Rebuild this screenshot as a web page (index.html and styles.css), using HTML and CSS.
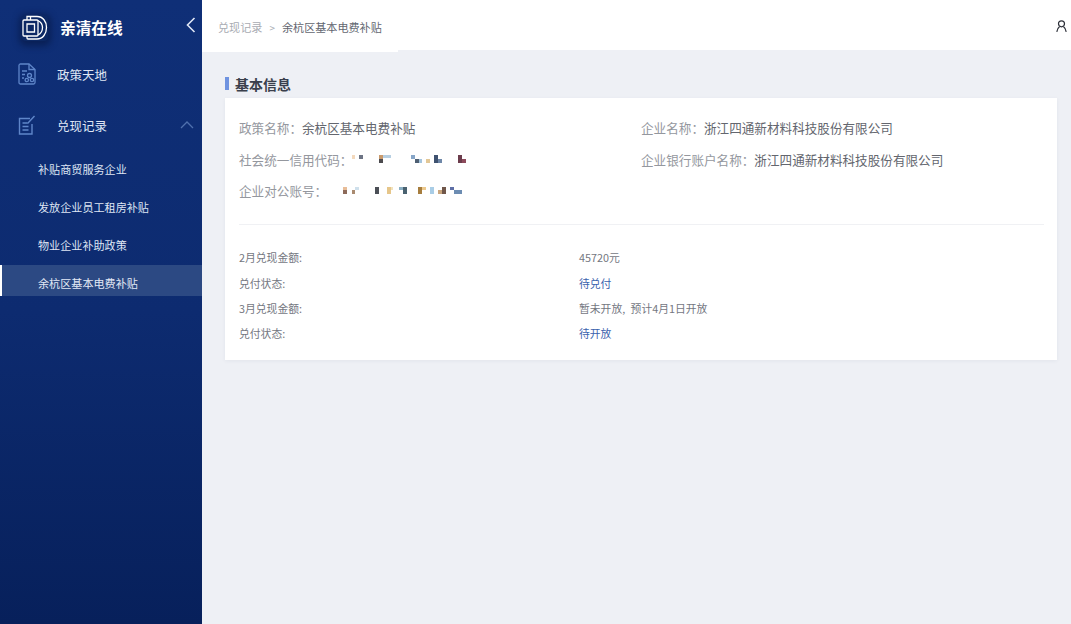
FILE: index.html
```html
<!DOCTYPE html>
<html>
<head>
  <title>基本信息</title>
  <link rel="stylesheet" href="styles.css">
</head>
<body>
  <div class="page">
    <div class="sidebar">
      <div class="brand">
        <svg class="brand-logo" width="26" height="26" viewBox="0 0 26 26" fill="none" stroke="#fff" stroke-width="1.300">
          <rect x="1" y="5" width="15" height="16" rx="1"/>
          <path d="M5 5V1.500h10c6 0 9.500 5 9.500 11s-3.500 11.500-9.500 11.500H6c-.7 0-1-.4-1-1v-2"/>
          <path d="M5 9h7.500v8H5z"/>
          <path d="M8.500 5V1.500M16 5.500c3 1.500 4.500 3.800 4.500 7s-1.500 6-4.500 7.500"/>
        </svg>
        <span class="brand-name">亲清在线</span>
        <svg class="brand-back" width="10" height="16" viewBox="0 0 10 16" fill="none" stroke="#dfe6f5" stroke-width="1.600">
          <path d="M8.500 1 1.500 8l7 7"/>
        </svg>
      </div>
      <div class="menu-item first">
        <svg class="menu-icon" width="18" height="22" viewBox="0 0 18 22" fill="none" stroke="#5f86c9" stroke-width="1.300">
          <path d="M1 2.500C1 1.500 1.700 1 2.500 1h8.500l6 5.500v13c0 1-.7 1.500-1.500 1.500h-13C1.700 21 1 20.500 1 19.500z"/>
          <path d="M11 1v5.500h6M4 8h5M4 11.500h3M4 15h2"/>
          <circle cx="11.500" cy="12.500" r="2"/>
          <circle cx="8.800" cy="17" r="1.700"/>
          <circle cx="14" cy="17" r="1.700"/>
        </svg>
        <span>政策天地</span>
      </div>
      <div class="menu-item second">
        <svg class="menu-icon" width="18" height="20" viewBox="0 0 18 20" fill="none" stroke="#5f86c9" stroke-width="1.400">
          <path d="M12 3.500H1.500v15.500h12.500V9"/>
          <path d="M4.500 8h5M4.500 11.500h6M4.500 15h6"/>
          <path d="M9.500 8.500 16.500 1"/>
        </svg>
        <span>兑现记录</span>
        <svg class="menu-arrow" width="14" height="8" viewBox="0 0 14 8" fill="none" stroke="#4f70ad" stroke-width="1.300">
          <path d="M1 7l6-6 6 6"/>
        </svg>
      </div>
      <div class="submenu">
        <div class="sub-item">补贴商贸服务企业</div>
        <div class="sub-item">发放企业员工租房补贴</div>
        <div class="sub-item">物业企业补助政策</div>
        <div class="sub-item active">余杭区基本电费补贴</div>
      </div>
    </div>
    <div class="main">
      <div class="topbar">
        <div class="crumbs">
          <span class="crumb-link">兑现记录</span>
          <span class="crumb-sep">&gt;</span>
          <span class="crumb-now">余杭区基本电费补贴</span>
        </div>
        <svg class="user-icon" width="11" height="12" viewBox="0 0 11 12" fill="none" stroke="#2c2f38" stroke-width="1.200">
          <circle cx="5.500" cy="3.800" r="3"/>
          <path d="M.8 11.800c.4-2.600 1.600-4.400 2.800-5.300M10.200 11.800c-.4-2.600-1.600-4.400-2.800-5.300"/>
        </svg>
      </div>
      <div class="content">
        <h2 class="section-title">基本信息</h2>
        <div class="card">
          <div class="info">
            <div class="info-row">
              <div class="info-col"><span class="label">政策名称：</span><span class="value">余杭区基本电费补贴</span></div>
              <div class="info-col"><span class="label">企业名称：</span><span class="value">浙江四通新材料科技股份有限公司</span></div>
            </div>
            <div class="info-row">
              <div class="info-col">
                <span class="label">社会统一信用代码：</span>
                <svg class="mosaic" width="120" height="12" viewBox="0 0 120 12">
                  <rect x="1" y="2" width="3" height="4" fill="#f3d9bd"/>
                  <rect x="8" y="2" width="4" height="4" fill="#6d7484"/>
                  <rect x="28" y="2" width="4" height="4" fill="#c99a6c"/>
                  <rect x="32" y="2" width="8" height="3" fill="#b7cfe2"/>
                  <rect x="28" y="6" width="4" height="4" fill="#4b4a4e"/>
                  <rect x="60" y="2" width="4" height="4" fill="#87a6c8"/>
                  <rect x="64" y="6" width="4" height="4" fill="#4e5f72"/>
                  <rect x="68" y="6" width="3" height="4" fill="#a4c4dd"/>
                  <rect x="75" y="6" width="4" height="4" fill="#e2c796"/>
                  <rect x="83" y="2" width="4" height="8" fill="#3f5270"/>
                  <rect x="87" y="6" width="4" height="4" fill="#6e87a8"/>
                  <rect x="107" y="2" width="4" height="8" fill="#6b3c4c"/>
                  <rect x="111" y="6" width="4" height="4" fill="#8d4a5c"/>
                </svg>
              </div>
              <div class="info-col"><span class="label">企业银行账户名称：</span><span class="value">浙江四通新材料科技股份有限公司</span></div>
            </div>
            <div class="info-row">
              <div class="info-col">
                <span class="label">企业对公账号：</span>
                <svg class="mosaic gap" width="124" height="12" viewBox="0 0 124 12">
                  <rect x="1" y="2" width="4" height="3" fill="#e8bd98"/>
                  <rect x="1" y="5" width="4" height="4" fill="#8d6a5a"/>
                  <rect x="10" y="5" width="3" height="4" fill="#a98a70"/>
                  <rect x="13" y="2" width="4" height="3" fill="#cfe0ec"/>
                  <rect x="33" y="2" width="4" height="7" fill="#4b4f56"/>
                  <rect x="45" y="2" width="4" height="7" fill="#e6c68a"/>
                  <rect x="49" y="2" width="2" height="3" fill="#f1e2bd"/>
                  <rect x="57" y="2" width="4" height="3" fill="#8cb0c4"/>
                  <rect x="61" y="2" width="4" height="7" fill="#4a6270"/>
                  <rect x="76" y="2" width="4" height="7" fill="#a67d3e"/>
                  <rect x="80" y="2" width="4" height="3" fill="#ecc98e"/>
                  <rect x="88" y="2" width="4" height="7" fill="#a9cde6"/>
                  <rect x="96" y="5" width="4" height="4" fill="#c9a67e"/>
                  <rect x="100" y="2" width="4" height="7" fill="#70574a"/>
                  <rect x="108" y="2" width="4" height="3" fill="#5d6ea6"/>
                  <rect x="112" y="5" width="8" height="4" fill="#6c8cb2"/>
                </svg>
              </div>
            </div>
          </div>
          <div class="detail">
            <div class="detail-row"><div class="detail-label">2月兑现金额:</div><div>45720元</div></div>
            <div class="detail-row"><div class="detail-label">兑付状态:</div><div class="status">待兑付</div></div>
            <div class="detail-row"><div class="detail-label">3月兑现金额:</div><div class="open-note">暂未开放, 预计4月1日开放</div></div>
            <div class="detail-row"><div class="detail-label">兑付状态:</div><div class="status">待开放</div></div>
          </div>
        </div>
      </div>
    </div>
  </div>
</body>
</html>
```

FILE: styles.css
```css
* {
  box-sizing: border-box;
}

body {
  margin: 0;
  font-family: "Noto Sans CJK SC", "Noto Sans", sans-serif;
  background-color: #eef0f5;
}

.page {
  display: flex;
  height: 624px;
  overflow: hidden;
}

.sidebar {
  width: 202px;
  flex-shrink: 0;
  background: linear-gradient(180deg, #0f2f77 0%, #0d2b70 50%, #07205b 100%);
  color: #dfe6f4;
}

.brand {
  display: flex;
  align-items: center;
  height: 51px;
  padding: 4px 6px 0 22px;
}

.brand-logo {
  background-color: #0c2864;
  box-shadow: 0 2px 6px 3px rgba(5, 20, 60, 0.55);
  border-radius: 4px;
}

.brand-name {
  margin-left: 12px;
  font-size: 15.700px;
  font-weight: 700;
  color: #fff;
  flex: 1;
}

.brand-back {
  margin-bottom: 5px;
}

.menu-item {
  display: flex;
  align-items: center;
  height: 46px;
  padding: 0 8px 0 18px;
  font-size: 12.500px;
}

.menu-item.second {
  height: 50px;
  margin-top: 3px;
}

.menu-icon {
  width: 18px;
  margin-right: 21px;
}

.menu-arrow {
  margin-left: auto;
}

.sub-item {
  height: 38px;
  line-height: 38px;
  padding-left: 38px;
  font-size: 11.100px;
}

.sub-item.active {
  height: 31px;
  line-height: 36px;
  margin-top: 1px;
  border-left: 2px solid #fff;
  padding-left: 36px;
  background-color: #2c4983;
  color: #e4e9f6;
  overflow: hidden;
}

.main {
  flex: 1;
  min-width: 0;
  display: flex;
  flex-direction: column;
}

.topbar {
  display: flex;
  align-items: flex-start;
  justify-content: space-between;
  height: 50px;
  padding-right: 4px;
  background-color: #fff;
}

.crumbs {
  display: flex;
  align-items: center;
  width: 196px;
  height: 52px;
  margin-bottom: -2px;
  padding: 2px 0 0 16px;
  font-size: 11.100px;
  color: #62666f;
  background-color: #fff;
}

.crumb-link {
  color: #a9acb3;
}

.crumb-sep {
  margin: 0 7px;
  font-size: 10px;
  color: #a9acb3;
}

.user-icon {
  margin-top: 20px;
}

.content {
  flex: 1;
  padding: 0 14px 0 23px;
}

.section-title {
  display: flex;
  align-items: center;
  height: 48px;
  margin: 0;
  padding-top: 19px;
  font-size: 14px;
  font-weight: 700;
  color: #3a3f4c;
}

.section-title::before {
  content: "";
  width: 4px;
  height: 13px;
  margin-right: 6px;
  background-color: #6f93e0;
}

.card {
  height: 262px;
  padding: 14px 13px 0 14px;
  background-color: #fff;
  box-shadow: 0 1px 4px rgba(40, 50, 80, 0.06);
}

.info {
  border-bottom: 1px solid #f0f1f4;
  height: 113px;
}

.info-row {
  display: flex;
  height: 31.500px;
  align-items: center;
  font-size: 12.600px;
}

.info-col {
  display: flex;
  align-items: center;
  width: 402px;
}

.label {
  color: #94979e;
}

.value {
  color: #63666e;
}

.mosaic {
  display: block;
  margin-left: -1px;
}

.mosaic.gap {
  margin-left: 15px;
}

.detail {
  padding-top: 19.600px;
  font-size: 10.800px;
  color: #74777f;
}

.detail-row {
  display: flex;
  height: 25.300px;
  align-items: center;
}

.detail-label {
  width: 340px;
}

.open-note {
  word-spacing: 3px;
}

.status {
  color: #3a62ad;
}
```
